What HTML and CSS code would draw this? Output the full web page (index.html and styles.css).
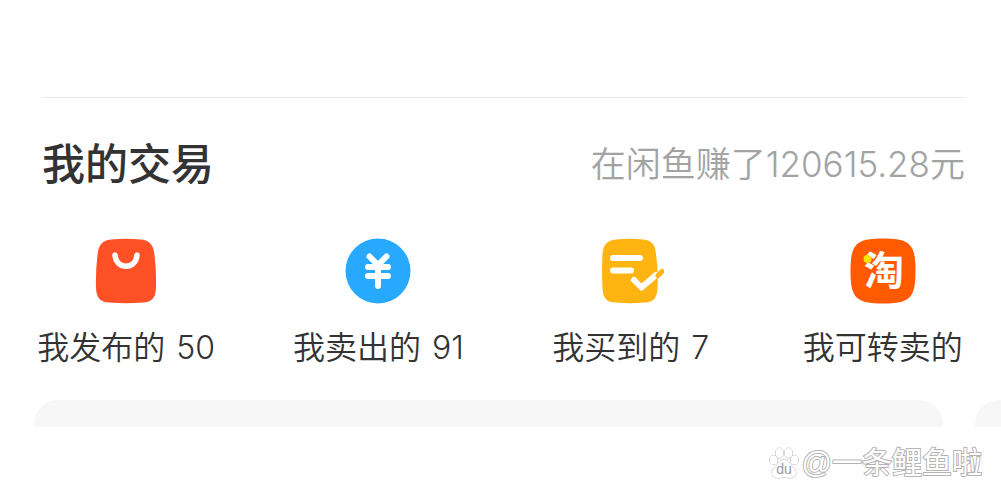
FILE: index.html
```html
<!DOCTYPE html>
<html lang="zh-CN">
<head>
    <meta charset="UTF-8">
    <meta name="viewport" content="width=device-width, initial-scale=1.0">
    <title>我的交易</title>
    <link rel="stylesheet" href="styles.css">
</head>
<body>
    <main class="trade">
        <header class="trade-header">
            <h1>我的交易</h1>
            <p class="earned">在闲鱼赚了120615.28元</p>
        </header>

        <nav class="trade-menu">
            <a href="#published" class="trade-item">
                <svg class="icon" viewBox="0 0 66 66" aria-hidden="true">
                    <path fill="#ff5026" d="M18 1.500Q33 0 48 1.500C57 2.500 60.500 7 61.500 17Q63.500 33 63 50C62.500 60 59 64 50 64.500Q33 66 16 64.500C7 64 3.500 60 3 50Q2.500 33 4.500 17C5.500 7 9 2.500 18 1.500Z"/>
                    <path fill="none" stroke="#fff" stroke-width="5.500" stroke-linecap="round" d="M22 17C23 32 43 32 44 17"/>
                </svg>
                <span>我发布的 <span class="count">50</span></span>
            </a>
            <a href="#sold" class="trade-item">
                <svg class="icon" viewBox="0 0 66 66" aria-hidden="true">
                    <circle cx="33" cy="33" r="32.500" fill="#27a9ff"/>
                    <path fill="none" stroke="#fff" stroke-width="6" stroke-linecap="round" stroke-linejoin="round" d="M24.500 18.500L33 27L41.500 18.500M23 29H43M23 38H43M33 27V48"/>
                </svg>
                <span>我卖出的 <span class="count">91</span></span>
            </a>
            <a href="#bought" class="trade-item">
                <svg class="icon" viewBox="0 0 66 66" aria-hidden="true">
                    <path fill="#ffb412" d="M18 1.500Q32 0 45 1.500C54 2.500 57 6 58 16Q60.500 33 59.500 50C59 60 56 64 47 64.500Q32 66 17 64.500C8 64 5 60 4.500 50Q3.500 33 4.500 16C5.500 6 9 2.500 18 1.500Z"/>
                    <path fill="none" stroke="#fff" stroke-width="6" stroke-linecap="round" d="M15 20H42M15 32.500H33"/>
                    <path fill="none" stroke="#fff" stroke-width="6" stroke-linecap="round" stroke-linejoin="round" d="M36 42L43.500 49.500L58 37"/>
                    <path stroke="#ffb412" stroke-width="5" stroke-linecap="round" d="M60 37.500L64 33.500"/>
                </svg>
                <span>我买到的 <span class="count">7</span></span>
            </a>
            <a href="#resell" class="trade-item">
                <svg class="icon" viewBox="0 0 66 66" aria-hidden="true">
                    <path fill="#ff5a00" d="M33 .5C60 .5 65.500 6 65.500 33S60 65.500 33 65.500S.5 60 .5 33S6 .5 33 .5Z"/>
                    <text class="tao" x="34" y="47" text-anchor="middle">淘</text>
                    <circle cx="17.500" cy="21" r="4" fill="#ffe100"/>
                </svg>
                <span>我可转卖的</span>
            </a>
        </nav>

        <div class="cards">
            <div class="card"></div>
            <div class="card"></div>
        </div>
    </main>

    <footer class="watermark">
        <svg class="paw" viewBox="0 0 30 32" aria-hidden="true">
            <g fill="#fff" stroke="#b4b4b4">
                <ellipse cx="10.500" cy="6" rx="4" ry="5"/>
                <ellipse cx="19.500" cy="6" rx="4" ry="5"/>
                <ellipse cx="4.500" cy="13" rx="4" ry="4.500"/>
                <ellipse cx="25.500" cy="13" rx="4" ry="4.500"/>
                <path d="M15 12.500C20 12.500 21 18 24.500 20.500C29 25 27 31 21 31C18 31 17 30 15 30C13 30 12 31 9 31C3 31 1 25 5.500 20.500C9 18 10 12.500 15 12.500Z"/>
            </g>
            <text class="du" x="15" y="27" text-anchor="middle">du</text>
        </svg>
        <span>@一条鲤鱼啦</span>
    </footer>
</body>
</html>
```
FILE: styles.css
```css
:root {
    --text: #333;
    --muted: #a3a3a3;
    --line: #e8e8e8;
    --card: #f7f7f7;
}

* {
    box-sizing: border-box;
    margin: 0;
    padding: 0;
}

body {
    font-family: Inter, "Noto Sans CJK SC", sans-serif;
    background: #fff;
    color: var(--text);
    overflow-x: hidden;
}

.trade {
    padding-top: 97px;
}

.trade-header {
    display: flex;
    justify-content: space-between;
    align-items: center;
    margin: 0 36px 0 42px;
    padding: 34px 0 42px;
    border-top: 1px solid var(--line);
}

h1 {
    font-size: 43px;
    line-height: 64px;
    font-weight: 500;
}

.earned {
    font-size: 35px;
    line-height: 60px;
    font-weight: 350;
    color: var(--muted);
}

/* the row runs slightly past the right edge of the screen */
.trade-menu {
    display: grid;
    grid-template-columns: repeat(4, 1fr);
    margin-right: -8px;
}

.trade-item {
    display: flex;
    flex-direction: column;
    align-items: center;
    gap: 20px;
    font-size: 32px;
    line-height: 48px;
    font-weight: 350;
    color: var(--text);
    text-decoration: none;
    white-space: nowrap;
}

.count {
    margin-left: 2px;
}

.icon {
    width: 66px;
    height: 66px;
}

.tao {
    font-family: "Noto Sans CJK SC", sans-serif;
    font-size: 40px;
    font-weight: 700;
    fill: #fff;
}

.cards {
    display: flex;
    gap: 32px;
    height: 55px;
    padding: 28px 0 0 34px;
    overflow: hidden;
}

.card {
    flex: 0 0 calc(100% - 58px);
    height: 160px;
    border-radius: 24px;
    background: var(--card);
}

.watermark {
    display: flex;
    justify-content: flex-end;
    align-items: center;
    gap: 3px;
    padding: 12px 19px 0 0;
    font-family: "Liberation Sans", "Noto Sans CJK SC", sans-serif;
    font-size: 30px;
    line-height: 48px;
    color: #fff;
    -webkit-text-stroke: 2px #b4b4b4;
    paint-order: stroke fill;
}

.paw {
    width: 30px;
    height: 32px;
}

.du {
    font-size: 14px;
    fill: #999;
    -webkit-text-stroke: 0;
}
```
